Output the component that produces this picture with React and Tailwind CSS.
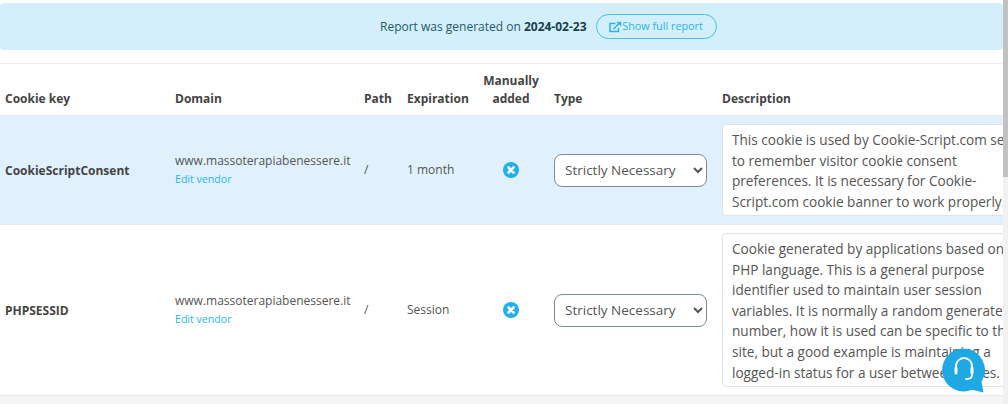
const rows = [
  {
    key: "CookieScriptConsent",
    expiration: "1 month",
    rowClass: "bg-[#e0f1fd]",
    boxClass: "h-[92px]",
    description:
      "This cookie is used by Cookie-Script.com service to remember visitor cookie consent preferences. It is necessary for Cookie-Script.com cookie banner to work properly.",
  },
  {
    key: "PHPSESSID",
    expiration: "Session",
    rowClass: "bg-white",
    boxClass: "h-[154px]",
    description:
      "Cookie generated by applications based on the PHP language. This is a general purpose identifier used to maintain user session variables. It is normally a random generated number, how it is used can be specific to the site, but a good example is maintaining a logged-in status for a user between pages.",
  },
];

function CookieRow({ row }) {
  return (
    <div className={`flex items-center border-b border-[#e8e8e8] ${row.rowClass}`}>
      <div className="w-[170px] shrink-0 pl-[5px] pt-[1px] text-[12px] font-bold text-[#444]">{row.key}</div>
      <div className="w-[189px] shrink-0 pl-[5px] text-[12px] leading-[18px] text-[#555]">
        <div>www.massoterapiabenessere.it</div>
        <div className="text-[10.6px] text-[#29b6f0]">Edit vendor</div>
      </div>
      <div className="w-[43px] shrink-0 pl-[5px] text-[12px] text-[#555]">/</div>
      <div className="w-[71px] shrink-0 pl-[5px] text-[12px] text-[#555]">{row.expiration}</div>
      <div className="flex w-[75px] shrink-0 justify-center">
        <svg width="16" height="16" viewBox="0 0 16 16">
          <circle cx="8" cy="8" r="8" fill="#1fb0ea" />
          <path d="M5.5 5.5l5 5M10.5 5.5l-5 5" stroke="#fff" strokeWidth="2.6" strokeLinecap="round" />
        </svg>
      </div>
      <div className="w-[174px] shrink-0 pl-[6px]">
        <select className="h-[33px] w-[153px] rounded-lg border border-[#7d8b97] bg-white pl-[6px] text-[13.5px] text-[#555]">
          <option>Strictly Necessary</option>
        </select>
      </div>
      <div className="shrink-0 py-[8px]">
        <div
          className={`w-[325px] overflow-hidden rounded border border-[#e3e3e3] bg-white py-[5px] pl-[9px] pr-[10px] text-[13.6px] leading-[20.6px] text-[#555] ${row.boxClass}`}
        >
          {row.description}
        </div>
      </div>
    </div>
  );
}

export default function App() {
  return (
    <div className="relative flex h-[404px] w-[1008px] overflow-hidden bg-white font-['Open_Sans',sans-serif]">
      <div className="w-[1003px] shrink-0 overflow-hidden">
        <div className="pt-[3px]">
          <div className="flex h-[47px] items-center gap-[9px] rounded bg-[#d3eff9] pl-[380px] text-[12px] text-[#24596f]">
            <span>
              Report was generated on <b className="text-[#173f52]">2024-02-23</b>
            </span>
            <span className="flex h-[25px] w-[121px] items-center justify-center rounded-full border border-[#45c0ee] text-[10.8px] text-[#2bb3e8]">
              <svg width="13" height="12" viewBox="0 0 13 12" fill="none" stroke="#2bb3e8" strokeWidth="1.5">
                <path d="M9.5 7v3.5h-8.5v-8h5.5" />
                <path d="M4.5 8l6-6" />
                <path d="M7.5 0.8h4.7v4.7z" fill="#2bb3e8" stroke="none" />
              </svg>
              Show full report
            </span>
          </div>
        </div>

        <div className="mt-[13px] w-[1300px] border-t border-[#eeeeee]">
          <div className="flex h-[52px] items-end border-b border-[#e8e8e8] pb-[7px] text-[12px] font-bold leading-[18px] text-[#444]">
            <div className="w-[170px] shrink-0 pl-[5px]">Cookie key</div>
            <div className="w-[189px] shrink-0 pl-[5px]">Domain</div>
            <div className="w-[43px] shrink-0 pl-[5px]">Path</div>
            <div className="w-[71px] shrink-0 pl-[5px]">Expiration</div>
            <div className="w-[75px] shrink-0 pl-[1px] text-center">
              Manually
              <br />
              added
            </div>
            <div className="w-[174px] shrink-0 pl-[6px]">Type</div>
            <div className="shrink-0">Description</div>
          </div>
          {rows.map((row) => (
            <CookieRow key={row.key} row={row} />
          ))}
          <div className="flex h-[10px] bg-[#f5f5f5] pt-[8px] pl-[722px]">
            <div className="h-[20px] w-[325px] rounded border border-[#e3e3e3] bg-white" />
          </div>
        </div>
      </div>

      {/* scrollbar */}
      <div className="w-[5px] shrink-0 bg-[#f1f1f1]">
        <div className="h-[177px] bg-[#c1c1c1]" />
      </div>

      {/* chat bubble */}
      <div className="absolute left-[941px] top-[348px]">
        <svg width="46" height="46" viewBox="0 0 46 46">
          <path d="M22.5 .5A21.5 21.5 0 1 0 31 41.8L42.5 44.5 40.5 33.5A21.5 21.5 0 0 0 22.5 .5z" fill="#1fa9e4" />
          <path d="M15 20v-2a8 8 0 0 1 16 0v2" fill="none" stroke="#fff" strokeWidth="1.8" />
          <path d="M15 20v5M31 20v5" fill="none" stroke="#fff" strokeWidth="3" strokeLinecap="round" />
          <path d="M31 27c0 3-2 4-6 4" fill="none" stroke="#fff" strokeWidth="1.8" strokeLinecap="round" />
        </svg>
      </div>
    </div>
  );
}
